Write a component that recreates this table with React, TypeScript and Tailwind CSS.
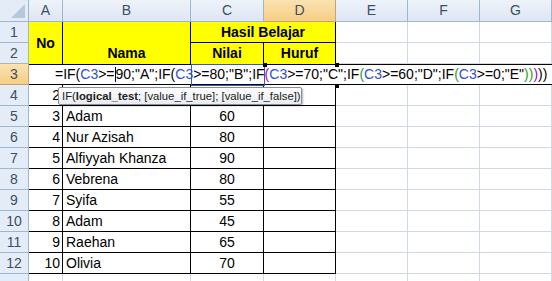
const cols = ["A", "B", "C", "D", "E", "F", "G"];

const rows = [
  { no: "3", nama: "Adam", nilai: "60" },
  { no: "4", nama: "Nur Azisah", nilai: "80" },
  { no: "5", nama: "Alfiyyah Khanza", nilai: "90" },
  { no: "6", nama: "Vebrena", nilai: "80" },
  { no: "7", nama: "Syifa", nilai: "55" },
  { no: "8", nama: "Adam", nilai: "45" },
  { no: "9", nama: "Raehan", nilai: "65" },
  { no: "10", nama: "Olivia", nilai: "70" },
];

const formula: [string, string][] = [
  ["=IF(", "text-black"],
  ["C3", "text-[#2f4fd0]"],
  [">=", "text-black"],
  ["|", "cursor"],
  ['90;"A";IF(', "text-black"],
  ["C3", "text-[#2f4fd0]"],
  ['>=80;"B";IF', "text-black"],
  ["(", "text-[#b000b0]"],
  ["C3", "text-[#2f4fd0]"],
  ['>=70;"C";IF', "text-black"],
  ["(", "text-[#2a9d2a]"],
  ["C3", "text-[#2f4fd0]"],
  ['>=60;"D";IF', "text-black"],
  ["(", "text-[#2a9d2a]"],
  ["C3", "text-[#2f4fd0]"],
  ['>=0;"E"', "text-black"],
  [")", "text-[#2a9d2a]"],
  [")", "text-[#2a9d2a]"],
  [")", "text-[#b000b0]"],
  [")", "text-black"],
  [")", "text-black"],
];

const rowHead =
  "flex items-center justify-center bg-[#e4ecf7] border-r border-b border-[#9eb6ce] text-[#3b4f66] text-[14px]";
const grid = "border-r border-b border-[#d0d7e5]";

function EmptyCells() {
  return (
    <>
      <div className={grid} />
      <div className={grid} />
      <div className={grid} />
    </>
  );
}

export default function App() {
  return (
    <div className="relative w-[552px] h-[281px] overflow-hidden bg-white font-['Liberation_Sans',sans-serif] text-black">
      <div className="grid grid-cols-[29px_34px_128px_73px_72px_72px_72px_72px] grid-rows-[22px_repeat(12,21px)_7px]">
        {/* column headers */}
        <div className="relative bg-[#e4ecf7] border-r border-b border-[#9eb6ce]">
          <div className="absolute right-[3px] bottom-[3px] w-0 h-0 border-l-[14px] border-l-transparent border-b-[14px] border-b-[#b7c8dd]" />
        </div>
        {cols.map((c) => (
          <div
            key={c}
            className={
              c === "D"
                ? "flex items-center justify-center bg-gradient-to-b from-[#fbe2b0] to-[#f6ce85] border-r border-b border-[#c2a573] text-[#3b4f66] text-[14px]"
                : "flex items-center justify-center bg-gradient-to-b from-[#eef3fa] to-[#dde6f2] border-r border-b border-[#9eb6ce] text-[#3b4f66] text-[14px]"
            }
          >
            {c}
          </div>
        ))}

        {/* row 1 */}
        <div className={rowHead}>1</div>
        <div className="row-span-2 flex items-center justify-center bg-[#ffff00] border-r border-black font-bold text-[14px]">
          No
        </div>
        <div className="row-span-2 flex items-end justify-center bg-[#ffff00] border-r border-black font-bold text-[14px]">
          Nama
        </div>
        <div className="col-span-2 flex items-center justify-center bg-[#ffff00] border-r border-b border-black font-bold text-[14px]">
          Hasil Belajar
        </div>
        <EmptyCells />

        {/* row 2 */}
        <div className={rowHead}>2</div>
        <div className="flex items-center justify-center bg-[#ffff00] border-r border-black font-bold text-[14px]">
          Nilai
        </div>
        <div className="flex items-center justify-center bg-[#ffff00] border-r border-black font-bold text-[14px]">
          Huruf
        </div>
        <EmptyCells />

        {/* row 3, formula being edited */}
        <div className="flex items-center justify-center bg-gradient-to-b from-[#fbe2b0] to-[#f6ce85] border-r border-b border-[#c2a573] text-[#3b4f66] text-[14px]">
          3
        </div>
        <div className="relative col-span-7 border-t border-b border-black">
          <div className="absolute left-[162px] top-[-1px] w-[74px] h-[22px] border border-[#3a55c8]" />
          <div className="absolute left-[234px] top-[-2px] w-[4px] h-[4px] bg-black" />
          <div className="absolute left-[306px] top-[-2px] w-[4px] h-[4px] bg-black" />
          <div className="absolute left-[306px] top-[19px] w-[4px] h-[4px] bg-black" />
          <div className="relative flex items-center h-full pl-[26px] text-[14px] whitespace-nowrap">
            {formula.map(([t, c], i) =>
              c === "cursor" ? (
                <span key={i} className="inline-block w-0 h-[15px] border-l border-black" />
              ) : (
                <span key={i} className={c}>
                  {t}
                </span>
              )
            )}
          </div>
        </div>

        {/* row 4 */}
        <div className={rowHead}>4</div>
        <div className="flex items-center justify-end pr-[2px] border-r border-b border-black text-[14px]">2</div>
        <div className="border-r border-b border-black" />
        <div className="border-r border-b border-black" />
        <div className="border-r border-b border-black" />
        <EmptyCells />

        {rows.map((r, i) => (
          <div key={r.no} className="contents">
            <div className={rowHead}>{i + 5}</div>
            <div className="flex items-center justify-end pr-[2px] border-r border-b border-black text-[14px]">
              {r.no}
            </div>
            <div className="flex items-center pl-[3px] border-r border-b border-black text-[14px]">
              {r.nama}
            </div>
            <div className="flex items-center justify-center border-r border-b border-black text-[14px]">
              {r.nilai}
            </div>
            <div className="border-r border-b border-black" />
            <EmptyCells />
          </div>
        ))}

        {/* partial row 13 */}
        <div className="bg-[#e4ecf7] border-r border-[#9eb6ce]" />
        <div className="border-r border-[#d0d7e5]" />
        <div className="border-r border-[#d0d7e5]" />
        <div className="border-r border-[#d0d7e5]" />
        <div className="border-r border-[#d0d7e5]" />
        <div className="border-r border-[#d0d7e5]" />
        <div className="border-r border-[#d0d7e5]" />
        <div className="border-r border-[#d0d7e5]" />
      </div>

      {/* function tooltip */}
      <div className="absolute left-[58px] top-[87px] w-[244px] h-[18px] flex items-center pl-[3px] bg-gradient-to-b from-[#ffffff] to-[#e8ebf0] border border-[#8a8f99] rounded-[2px] shadow-[1px_1px_2px_rgba(0,0,0,0.3)] text-[11.3px] text-[#222] whitespace-nowrap">
        IF(<span className="font-bold">logical_test</span>; [value_if_true]; [value_if_false])
      </div>
    </div>
  );
}
